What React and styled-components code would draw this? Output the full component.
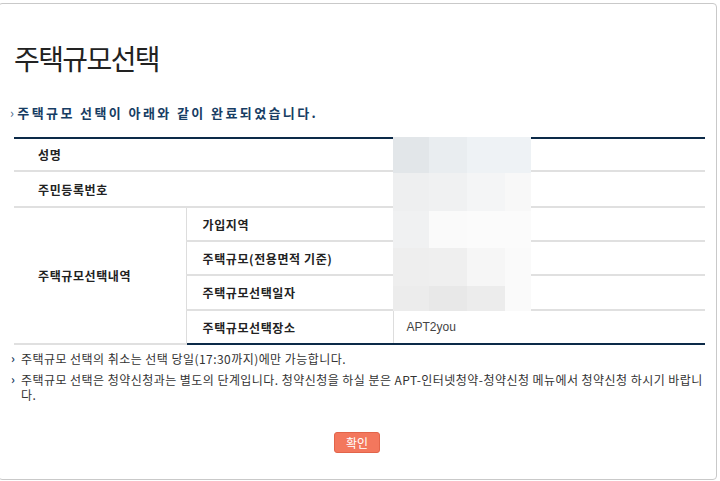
import React from 'react'
import styled, { createGlobalStyle } from 'styled-components'

const GlobalStyle = createGlobalStyle`
  html, body {
    margin: 0;
    padding: 0;
    background: #fff;
    overflow: hidden;
  }
  body {
    font-family: 'Noto Sans CJK KR', 'Noto Sans', sans-serif;
    color: #333;
  }
`

const Frame = styled.div`
  box-sizing: border-box;
  margin: 3px 0 0 -2px;
  width: 719px;
  height: 477px;
  border: 1px solid #c9c9c9;
  border-radius: 4px;
  padding: 36px 12px 0 15px;
  display: flex;
  flex-direction: column;
`

const Title = styled.h1`
  margin: 0;
  font-size: 28px;
  line-height: 36px;
  font-weight: 400;
  letter-spacing: -1.6px;
  color: #222;
`

const Lead = styled.p`
  margin: 29px 0 0 -4px;
  font-size: 13px;
  line-height: 16px;
  font-weight: 700;
  letter-spacing: 2.4px;
  color: #173d63;
  &::before {
    content: '›';
    font-weight: 400;
    margin-right: 1px;
    color: #4a6a8a;
  }
`

const TableWrap = styled.div`
  position: relative;
  margin-top: 16px;
  width: 691px;
`

const Table = styled.table`
  width: 100%;
  border-collapse: collapse;
  border-top: 2px solid #0c2a48;
  border-bottom: 2px solid #0c2a48;
  font-size: 12px;
  th, td {
    border-bottom: 2px solid #e0e0e0;
    padding: 0;
    text-align: left;
    vertical-align: middle;
  }
  tr:last-child th, tr:last-child td {
    border-bottom: none;
  }
`

const Row = styled.tr`
  height: ${p => p.h}px;
`

const Head = styled.th`
  padding-left: ${p => p.indent}px !important;
  font-weight: 700;
  letter-spacing: 0.6px;
  color: #222;
  border-left: ${p => (p.divided ? '1px solid #ddd' : 'none')};
`

const Value = styled.td`
  padding-left: 13px !important;
  color: #444;
  font-family: 'Liberation Sans', Arial, sans-serif;
  font-size: 12px;
  border-left: 1px solid #ddd;
`

const Redaction = styled.div`
  position: absolute;
  left: 379px;
  top: 0;
  width: 138px;
  height: 174px;
  display: grid;
  grid-template-columns: 36px 38px 38px 26px;
  grid-template-rows: 36px 38px 37px 38px 25px;
`

const Block = styled.div`
  background: ${p => p.c};
`

const Notes = styled.ul`
  list-style: none;
  margin: 6px 0 0 -3px;
  padding: 0;
  width: 702px;
  font-size: 12px;
  line-height: 15px;
  letter-spacing: 0.45px;
  color: #333;
  li {
    position: relative;
    padding-left: 10px;
    margin-bottom: 6px;
  }
  li::before {
    content: '›';
    position: absolute;
    left: 0;
    top: -1px;
    color: #1c3f66;
    font-weight: 700;
  }
`

const Actions = styled.div`
  display: flex;
  justify-content: center;
  margin-top: 24px;
  padding-right: 4px;
`

const Button = styled.button`
  width: 46px;
  height: 21px;
  border: 1px solid #e2644a;
  border-radius: 3px;
  background: #f3775d;
  color: #fff;
  font-family: 'Noto Sans CJK KR', sans-serif;
  font-size: 12px;
  line-height: 17px;
  padding: 0;
  cursor: pointer;
`

const blocks = [
  '#e2e6e9', '#e9edf0', '#eef2f5', '#eef2f5',
  '#eeeff0', '#f0f1f2', '#f4f5f6', '#f8f8f8',
  '#f0f1f2', '#fafafa', '#fbfbfb', '#fbfbfb',
  '#eeeeee', '#efefef', '#f6f6f6', '#fafafa',
  '#ececec', '#e8e8e8', '#ececec', '#fafafa',
]

export default function App() {
  return (
    <>
      <GlobalStyle />
      <Frame>
        <Title>주택규모선택</Title>
        <Lead>주택규모 선택이 아래와 같이 완료되었습니다.</Lead>
        <TableWrap>
          <Table>
            <colgroup>
              <col style={{ width: 172 }} />
              <col style={{ width: 207 }} />
              <col />
            </colgroup>
            <tbody>
              <Row h={33}>
                <Head colSpan={2} indent={24}>성명</Head>
                <Value></Value>
              </Row>
              <Row h={36}>
                <Head colSpan={2} indent={24}>주민등록번호</Head>
                <Value></Value>
              </Row>
              <Row h={34}>
                <Head rowSpan={4} indent={24}>주택규모선택내역</Head>
                <Head indent={16} divided>가입지역</Head>
                <Value></Value>
              </Row>
              <Row h={34}>
                <Head indent={16} divided>주택규모(전용면적 기준)</Head>
                <Value></Value>
              </Row>
              <Row h={35}>
                <Head indent={16} divided>주택규모선택일자</Head>
                <Value></Value>
              </Row>
              <Row h={34}>
                <Head indent={16} divided>주택규모선택장소</Head>
                <Value>APT2you</Value>
              </Row>
            </tbody>
          </Table>
          <Redaction>
            {blocks.map((c, i) => <Block key={i} c={c} />)}
          </Redaction>
        </TableWrap>
        <Notes>
          <li>주택규모 선택의 취소는 선택 당일(17:30까지)에만 가능합니다.</li>
          <li>주택규모 선택은 청약신청과는 별도의 단계입니다. 청약신청을 하실 분은 APT-인터넷청약-청약신청 메뉴에서 청약신청 하시기 바랍니다.</li>
        </Notes>
        <Actions>
          <Button>확인</Button>
        </Actions>
      </Frame>
    </>
  )
}
